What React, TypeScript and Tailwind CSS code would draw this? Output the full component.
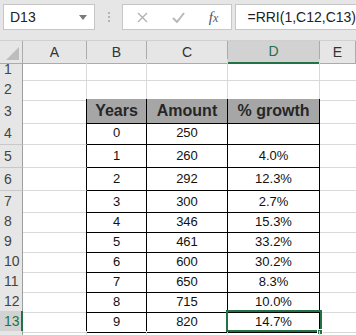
import React from "react";

type Row = {
  n: number;
  h: string;
  kind: "empty" | "head" | "data";
  year?: string;
  amount?: string;
  growth?: string;
};

const rows: Row[] = [
  { n: 1, h: "h-[20px]", kind: "empty" },
  { n: 2, h: "h-[20px]", kind: "empty" },
  { n: 3, h: "h-[23px]", kind: "head" },
  { n: 4, h: "h-[23px]", kind: "data", year: "0", amount: "250", growth: "" },
  { n: 5, h: "h-[23px]", kind: "data", year: "1", amount: "260", growth: "4.0%" },
  { n: 6, h: "h-[23px]", kind: "data", year: "2", amount: "292", growth: "12.3%" },
  { n: 7, h: "h-[20px]", kind: "data", year: "3", amount: "300", growth: "2.7%" },
  { n: 8, h: "h-[20px]", kind: "data", year: "4", amount: "346", growth: "15.3%" },
  { n: 9, h: "h-[20px]", kind: "data", year: "5", amount: "461", growth: "33.2%" },
  { n: 10, h: "h-[20px]", kind: "data", year: "6", amount: "600", growth: "30.2%" },
  { n: 11, h: "h-[20px]", kind: "data", year: "7", amount: "650", growth: "8.3%" },
  { n: 12, h: "h-[20px]", kind: "data", year: "8", amount: "715", growth: "10.0%" },
  { n: 13, h: "h-[20px]", kind: "data", year: "9", amount: "820", growth: "14.7%" },
  { n: 14, h: "h-[20px]", kind: "empty" },
];

const gridCols = "grid grid-cols-[23px_64px_60px_81px_92px_1fr]";

function FormulaBar() {
  return (
    <div className="flex h-[40px] items-start bg-[#e6e6e6] pt-[4px]">
      {/* Name box */}
      <div className="ml-[3px] flex h-[26px] w-[101px] items-center border border-[#c6c6c6] bg-white pl-[6px] pr-[7px]">
        <span className="flex-1 text-[14px] text-[#222]">D13</span>
        <svg width="8" height="5" viewBox="0 0 8 5">
          <path d="M0 0h8L4 5z" fill="#7a7a7a" />
        </svg>
      </div>
      {/* dotted grip */}
      <div className="flex h-[26px] w-[30px] flex-col items-center justify-center gap-[2px]">
        <span className="h-[2px] w-[2px] bg-[#b4b4b4]" />
        <span className="h-[2px] w-[2px] bg-[#b4b4b4]" />
        <span className="h-[2px] w-[2px] bg-[#b4b4b4]" />
      </div>
      {/* cancel / enter / fx */}
      <div className="flex h-[26px] w-[110px] items-center border border-[#c6c6c6] bg-white">
        <div className="flex w-[38px] justify-center">
          <svg width="11" height="11" viewBox="0 0 11 11">
            <path d="M1 1l9 9M10 1l-9 9" stroke="#b0b0b0" strokeWidth="1.3" />
          </svg>
        </div>
        <div className="flex w-[34px] justify-center">
          <svg width="13" height="11" viewBox="0 0 13 11">
            <path d="M1 6l4 4 7-9" stroke="#b8b8b8" strokeWidth="2" fill="none" />
          </svg>
        </div>
        <div className="flex w-[36px] justify-center font-['Liberation_Serif',serif] text-[15px] italic text-[#555]">
          f<span className="text-[12px] mt-[3px]">x</span>
        </div>
      </div>
      {/* formula */}
      <div className="ml-[3px] flex h-[26px] flex-1 items-center border border-r-0 border-[#c6c6c6] bg-white pl-[11px] text-[14px] text-[#222]">
        =RRI(1,C12,C13)
      </div>
    </div>
  );
}

function ColumnHeaders() {
  const letters = ["A", "B", "C", "D", "E"];
  return (
    <div className={`${gridCols} h-[19px] border-t border-[#d0d0d0]`}>
      <div className="relative border-r border-b border-[#ababab] bg-[#e6e6e6]">
        <svg className="absolute bottom-[3px] right-[3px]" width="13" height="13" viewBox="0 0 13 13">
          <path d="M13 0v13H0z" fill="#bdbdbd" />
        </svg>
      </div>
      {letters.map((l) =>
        l === "D" ? (
          <div
            key={l}
            className="flex items-center justify-center border-r border-b-2 border-r-[#ababab] border-b-[#217346] bg-[#d2d2d2] text-[14px] text-[#217346]"
          >
            {l}
          </div>
        ) : (
          <div
            key={l}
            className="flex items-center justify-center border-r border-b border-[#ababab] bg-[#e6e6e6] text-[14px] text-[#333]"
          >
            {l}
          </div>
        )
      )}
    </div>
  );
}

function SheetRow({ row }: { row: Row }) {
  const inTable = row.n >= 3 && row.n <= 13;
  const topLine = row.n === 2;
  const selected = row.n === 13;

  const headCell = selected
    ? "flex items-center pl-[4px] border-r-2 border-b border-r-[#217346] border-b-[#ababab] bg-[#d2d2d2] text-[14px] text-[#217346]"
    : "flex items-center pl-[4px] border-r border-b border-r-[#9e9e9e] border-b-[#c8c8c8] bg-[#e6e6e6] text-[14px] text-[#444]";

  const cellA = inTable
    ? "border-r border-b border-r-black border-b-[#d9d9d9]"
    : "border-r border-b border-[#d9d9d9]";

  const tableCell = inTable
    ? "flex items-center justify-center border-r border-b border-black"
    : topLine
      ? "border-r border-b border-r-[#d9d9d9] border-b-black"
      : "border-r border-b border-[#d9d9d9]";

  const headFill = row.kind === "head" ? "bg-[#a6a6a6] text-[16px] font-bold text-[#262626]" : "text-[13px] text-[#111]";

  return (
    <div className={`${gridCols} ${row.h}`}>
      {/* row 14 is only a sliver at the bottom edge, so no label */}
      <div className={headCell}>{row.n < 14 ? row.n : null}</div>
      <div className={cellA} />
      <div className={`${tableCell} ${headFill}`}>{row.kind === "head" ? "Years" : row.year}</div>
      <div className={`${tableCell} ${headFill}`}>{row.kind === "head" ? "Amount" : row.amount}</div>
      <div className={`${tableCell} ${headFill} relative`}>
        {row.kind === "head" ? "% growth" : row.growth}
        {selected && (
          <>
            <div className="absolute -left-[2px] -top-[1px] h-[22px] w-[96px] border-2 border-[#217346]" />
            <div className="absolute -bottom-[3px] -right-[4px] h-[6px] w-[6px] border border-white bg-[#217346]" />
          </>
        )}
      </div>
      <div className="border-b border-[#d9d9d9]" />
    </div>
  );
}

export default function App() {
  return (
    <div className="h-[335px] w-[356px] overflow-hidden bg-white font-['Liberation_Sans',Arial,sans-serif]">
      <FormulaBar />
      <ColumnHeaders />
      {rows.map((row) => (
        <SheetRow key={row.n} row={row} />
      ))}
    </div>
  );
}
